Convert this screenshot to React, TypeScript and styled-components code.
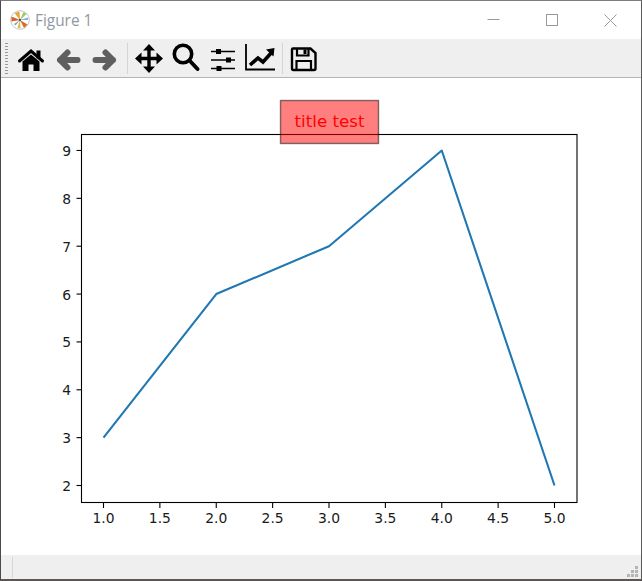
import React from "react";
import styled, { createGlobalStyle } from "styled-components";

const GlobalStyle = createGlobalStyle`
  html, body {
    margin:0;
    padding:0;
    background:#fff;
  }
`

const Window = styled.div`
  width:642px;
  height:581px;
  box-sizing:border-box;
  display:flex;
  flex-direction:column;
  background:#fff;
  border-top:1px solid #7d7d7d;
  border-left:1px solid #4a4a4a;
  border-right:1px solid #5a5a5a;
  border-bottom:2px solid #5c5654;
`

const TitleBar = styled.div`
  height:38px;
  flex:none;
  display:flex;
  align-items:center;
  background:#fff;
`

const Logo = styled.svg`
  width:20px;
  height:20px;
  margin-left:9px;
  flex:none;
`

const Title = styled.span`
  margin-left:5px;
  flex:1;
  font-family:"Open Sans", sans-serif;
  font-size:15.4px;
  color:#8f99a3;
`

const Controls = styled.div`
  display:flex;
  height:100%;
  margin-right:1px;
`

const ControlButton = styled.div`
  width:58.5px;
  display:flex;
  align-items:center;
  justify-content:center;
`

const Toolbar = styled.div`
  height:38px;
  flex:none;
  display:flex;
  align-items:center;
  background:#efefef;
  border-bottom:1px solid #b4b4b4;
  box-sizing:content-box;
`

const Handle = styled.div`
  width:3px;
  height:33px;
  margin:0 4px 0 4px;
  flex:none;
  background-image:radial-gradient(#9a9a9a 45%, transparent 50%);
  background-size:2px 3px;
`

const ToolButton = styled.div`
  width:37px;
  height:100%;
  flex:none;
  display:flex;
  align-items:center;
  justify-content:center;
`

const Separator = styled.div`
  width:1px;
  height:31px;
  margin:0 2px 0 4px;
  flex:none;
  background:#d4d4d4;
`

const ToolIcon = styled.svg`
  width:30px;
  height:30px;
  overflow:visible;
`

const Canvas = styled.div`
  flex:1;
  min-height:0;
  background:#fff;
`

const Chart = styled.svg`
  display:block;
  width:640px;
  height:477px;
`

const TickLabel = styled.text`
  font-family:"DejaVu Sans", sans-serif;
  font-size:13.89px;
  fill:#1a1a1a;
`

const BoxLabel = styled.text`
  font-family:"DejaVu Sans", sans-serif;
  font-size:16.67px;
  fill:#ff0000;
`

const StatusBar = styled.div`
  height:24px;
  flex:none;
  display:flex;
  align-items:center;
  justify-content:space-between;
  background:#efefef;
`

const StatusDivider = styled.div`
  width:1px;
  height:21px;
  margin-left:11px;
  background:#d6d6d6;
`

const Grip = styled.svg`
  width:11px;
  height:11px;
  margin:9px 3px 0 0;
`

const points: [number, number][] = [[1, 3], [2, 6], [3, 7], [4, 9], [5, 2]]
const xTicks = [1, 1.5, 2, 2.5, 3, 3.5, 4, 4.5, 5]
const yTicks = [2, 3, 4, 5, 6, 7, 8, 9]

// axes are placed in the chart's own coordinates (window minus 1,78)
const toX = (v: number) => 102.5 + (v - 1) * 112.75
const toY = (v: number) => 407.5 - (v - 2) * 47.86

const Plot = () => {
  const line = points.map(([x, y]) => `${toX(x)},${toY(y)}`).join(" ")
  return (
    <Chart viewBox="0 0 640 477">
      <rect x="80.5" y="56.5" width="495.5" height="368" fill="#fff" stroke="#000" strokeWidth="1.1" />
      {xTicks.map((t) => (
        <g key={t}>
          <line x1={toX(t)} x2={toX(t)} y1="425" y2="430" stroke="#000" strokeWidth="1.1" />
          <TickLabel x={toX(t)} y="445" textAnchor="middle">{t.toFixed(1)}</TickLabel>
        </g>
      ))}
      {yTicks.map((t) => (
        <g key={t}>
          <line x1="75.5" x2="80.5" y1={toY(t)} y2={toY(t)} stroke="#000" strokeWidth="1.1" />
          <TickLabel x="70" y={toY(t) + 5.5} textAnchor="end">{t}</TickLabel>
        </g>
      ))}
      <polyline points={line} fill="none" stroke="#1f77b4" strokeWidth="2.08" strokeLinejoin="round" />
      <rect x="279.5" y="22.5" width="98" height="43" fill="#ff0000" fillOpacity="0.5" stroke="#000" strokeOpacity="0.5" strokeWidth="1.4" />
      <BoxLabel x="328.5" y="49" textAnchor="middle">title test</BoxLabel>
    </Chart>
  )
}

const App = () => {
  return (
    <Window>
      <GlobalStyle />
      <TitleBar>
        <Logo viewBox="0 0 20 20">
          <circle cx="10" cy="10" r="9.3" fill="#fff" stroke="#bdbdbd" strokeWidth="0.9" />
          <path d="M10 10 L4.5 3 L9.5 1.5 Z" fill="#e8a33d" />
          <path d="M10 10 L1.5 6.5 L1.5 11.5 Z" fill="#d9622b" />
          <path d="M10 10 L13.5 2 L16.5 4 Z" fill="#9acb5a" />
          <path d="M10 10 L17.5 14.5 L14 18 Z" fill="#e0672a" />
          <path d="M10 10 L7.5 17.5 L10.5 18.5 Z" fill="#c9c24a" />
          <path d="M10 10 L4 14 L5.5 15.5 Z" fill="#7f9fc4" />
          <path d="M10 10 L18 7.5 L18 10 Z" fill="#7fb2d9" />
          <circle cx="10" cy="10" r="1.2" fill="#555" />
        </Logo>
        <Title>Figure 1</Title>
        <Controls>
          <ControlButton>
            <svg width="13" height="13" viewBox="0 0 13 13"><path d="M0.5 5.5H12.5" stroke="#9a9a9a" /></svg>
          </ControlButton>
          <ControlButton>
            <svg width="13" height="13" viewBox="0 0 13 13"><rect x="0.5" y="0.5" width="11" height="11" fill="none" stroke="#9a9a9a" /></svg>
          </ControlButton>
          <ControlButton>
            <svg width="13" height="13" viewBox="0 0 13 13"><path d="M0.5 0.5L12.5 12.5M12.5 0.5L0.5 12.5" stroke="#9a9a9a" /></svg>
          </ControlButton>
        </Controls>
      </TitleBar>
      <Toolbar>
        <Handle />
        <ToolButton>
          <ToolIcon viewBox="0 0 30 30">
            <path d="M3.5 18 L15 8 L26.5 18" fill="none" stroke="#000" strokeWidth="3" strokeLinecap="round" />
            <path d="M20.5 7.5h4v8h-4z" fill="#000" />
            <path d="M6.5 18.5 L15 11.5 L23.5 18.5 V28 H17.5 V21.5 H12.5 V28 H6.5 Z" fill="#000" />
          </ToolIcon>
        </ToolButton>
        <ToolButton>
          <ToolIcon viewBox="0 0 30 30">
            <path d="M24.5 17H7M14.5 9.5L7 17L14.5 24.5" fill="none" stroke="#5f5f5f" strokeWidth="6" strokeLinecap="round" strokeLinejoin="round" />
          </ToolIcon>
        </ToolButton>
        <ToolButton>
          <ToolIcon viewBox="0 0 30 30">
            <path d="M5.5 17H23M15.5 9.5L23 17L15.5 24.5" fill="none" stroke="#5f5f5f" strokeWidth="6" strokeLinecap="round" strokeLinejoin="round" />
          </ToolIcon>
        </ToolButton>
        <Separator />
        <ToolButton>
          <ToolIcon viewBox="0 0 30 30">
            <path d="M15 4V27M4 15.5H26" stroke="#000" strokeWidth="3.4" fill="none" />
            <path d="M15 1L21 7.5H9Z M15 30L21 23.5H9Z M1 15.5L7.5 9.5V21.5Z M29 15.5L22.5 9.5V21.5Z" fill="#000" />
          </ToolIcon>
        </ToolButton>
        <ToolButton>
          <ToolIcon viewBox="0 0 30 30">
            <circle cx="12" cy="11" r="8.7" fill="none" stroke="#000" strokeWidth="3.6" />
            <path d="M18.5 17.5L26.5 26" stroke="#000" strokeWidth="4" strokeLinecap="round" />
          </ToolIcon>
        </ToolButton>
        <ToolButton>
          <ToolIcon viewBox="0 0 30 30">
            <path d="M3 8.5H27M3 17H27M3 25.5H27" stroke="#000" strokeWidth="1.6" />
            <path d="M8 6h5v5H8z M18 14.5h5v5h-5z M8.5 23h5v5h-5z" fill="#000" />
          </ToolIcon>
        </ToolButton>
        <ToolButton>
          <ToolIcon viewBox="0 0 30 30">
            <path d="M1 1V26.5H30" fill="none" stroke="#000" strokeWidth="1.8" />
            <path d="M5 22L13 15L18 19L27 9" fill="none" stroke="#000" strokeWidth="3.6" />
            <path d="M21 6.5L29.5 5L28.5 13.5Z" fill="#000" />
          </ToolIcon>
        </ToolButton>
        <Separator />
        <ToolButton>
          <ToolIcon viewBox="0 0 30 30">
            <path d="M4 5.5H21.5L26.5 10V25.5Q26.5 27 25 27H4.5Q3 27 3 25.5V6.5Q3 5.5 4 5.5Z" fill="none" stroke="#000" strokeWidth="2.4" />
            <path d="M8 6V12.5H19.5V6" fill="none" stroke="#000" strokeWidth="2.2" />
            <path d="M14.5 6.5h3v4.5h-3z" fill="#000" />
            <path d="M7.5 27V18H22 V27" fill="none" stroke="#000" strokeWidth="2.2" />
          </ToolIcon>
        </ToolButton>
      </Toolbar>
      <Canvas>
        <Plot />
      </Canvas>
      <StatusBar>
        <StatusDivider />
        <Grip viewBox="0 0 11 11">
          <path d="M8 0h3v3H8z M4 4h3v3H4z M8 4h3v3H8z M0 8h3v3H0z M4 8h3v3H4z M8 8h3v3H8z" fill="#b4b4b4" />
        </Grip>
      </StatusBar>
    </Window>
  )
}

export default App;
